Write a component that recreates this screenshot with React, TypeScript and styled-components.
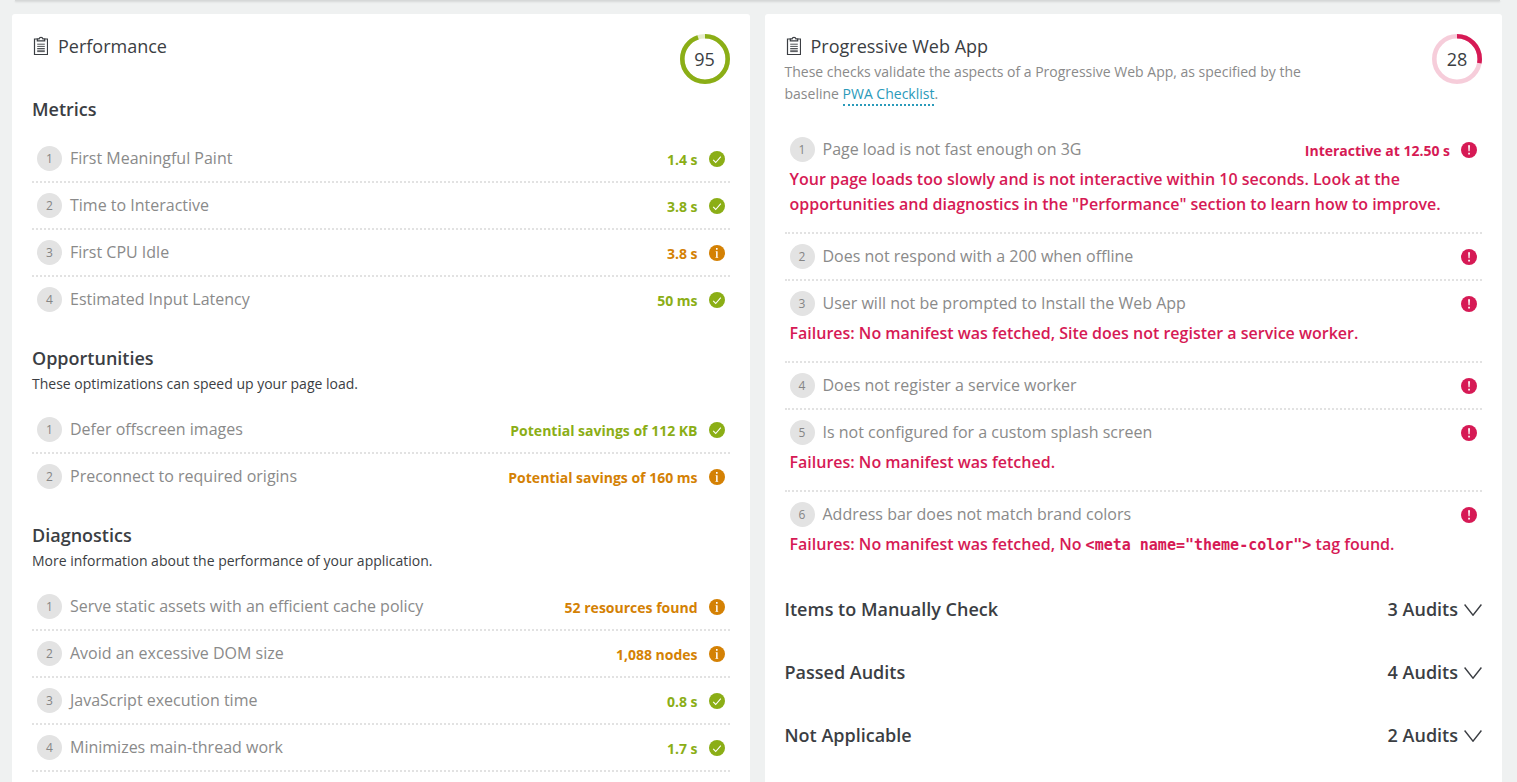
import React from "react";
import styled, { createGlobalStyle } from "styled-components";

type Status = "pass" | "warn" | "fail";

const colors: Record<Status, string> = {
  pass: "#8bae16",
  warn: "#d48104",
  fail: "#d61a55",
};

const GlobalStyle = createGlobalStyle`
  *, *::before, *::after { box-sizing: border-box; }
  body {
    margin: 0;
    background: #eff1f1;
    color: #3b3e43;
    font-family: "Open Sans", "Noto Sans", sans-serif;
    font-size: 16px;
  }
  h2, h3, p, ol { margin: 0; padding: 0; }
`;

const Page = styled.main`
  padding: 0 15px 0 12px;
`;

const PanelEdge = styled.div`
  height: 1px;
  margin: 0 2px 13px 3px;
  background: #d6d8d8;
  box-shadow: 0 1px 2px rgba(0, 0, 0, 0.16);
`;

const Columns = styled.div`
  display: grid;
  grid-template-columns: 1fr 1fr;
  gap: 15px;
`;

const Card = styled.section`
  background: #ffffff;
  border-radius: 3px;
  padding: 20px 20px 24px;
`;

const CardHeader = styled.header<{ $tall?: boolean }>`
  display: flex;
  justify-content: space-between;
  align-items: flex-start;
  min-height: ${(p) => (p.$tall ? 93 : 63)}px;
`;

const CardTitle = styled.h2`
  display: flex;
  align-items: center;
  gap: 10px;
  height: 24px;
  font-size: 18px;
  line-height: 24px;
  font-weight: 400;
`;

const Description = styled.p`
  max-width: 560px;
  margin-top: 3px;
  color: #8a8a8a;
  font-size: 14px;
  line-height: 22px;
`;

const TextLink = styled.a`
  display: inline-block;
  color: #2a9aba;
  line-height: 20px;
  text-decoration: none;
  border-bottom: 2px dotted #2a9aba;
`;

const Gauge = styled.div`
  display: grid;
  flex: none;
  width: 50px;
  height: 50px;
  place-items: center;
  font-size: 18px;

  > * { grid-area: 1 / 1; }
`;

const Group = styled.section`
  & + & { margin-top: 24px; }
`;

const GroupTitle = styled.h3`
  font-size: 18px;
  line-height: 24px;
  font-weight: 600;
  padding-bottom: 3px;
`;

const GroupNote = styled.p`
  font-size: 14px;
  line-height: 22px;
`;

const AuditList = styled.ol<{ $closed?: boolean }>`
  list-style: none;
  border-bottom: ${(p) => (p.$closed ? "2px dotted #e2e2e2" : "0")};

  ${Group} & { margin-top: 12px; }
`;

const AuditItem = styled.li`
  border-bottom: 2px dotted #e2e2e2;

  &:last-child { border-bottom: 0; }
`;

const AuditRow = styled.div`
  display: flex;
  align-items: center;
  padding: 10px 5px;
  height: 45px;
`;

const Index = styled.span`
  display: flex;
  flex: none;
  align-items: center;
  justify-content: center;
  width: 25px;
  height: 25px;
  margin-right: 8px;
  border-radius: 50%;
  background: #e3e3e3;
  color: #858585;
  font-size: 12px;
`;

const AuditName = styled.span`
  flex: 1;
  padding-bottom: 2px;
  color: #8a8a8a;
  font-size: 16px;
  line-height: 24px;
`;

const AuditValue = styled.span<{ $status: Status }>`
  margin-right: 11px;
  padding-top: 3px;
  color: ${(p) => colors[p.$status]};
  font-size: 14px;
  line-height: 20px;
  font-weight: 700;
`;

const Failure = styled.p`
  padding: 0 5px 15px;
  margin-top: -5px;
  color: ${colors.fail};
  font-size: 16px;
  line-height: 25px;
  font-weight: 600;
`;

const Code = styled.code`
  font-family: "DejaVu Sans Mono", monospace;
  font-size: 15px;
  line-height: 20px;
`;

const Disclosures = styled.div`
  display: flex;
  flex-direction: column;
  gap: 39px;
  margin-top: 25px;
  padding-bottom: 24px;
`;

const Disclosure = styled.button`
  display: flex;
  align-items: center;
  width: 100%;
  height: 24px;
  padding: 0;
  border: 0;
  background: none;
  color: inherit;
  font-family: inherit;
  font-size: 18px;
  line-height: 24px;
  font-weight: 600;
  text-align: left;
  cursor: pointer;
`;

const DisclosureLabel = styled.span`
  flex: 1;
`;

const Icon = styled.svg`
  display: block;
  flex: none;
`;

const Chevron = styled(Icon)`
  margin: 2px 0 0 6px;
`;

const Clipboard = () => (
  <Icon width="16" height="20" viewBox="0 0 16 20" fill="none" stroke="#3b3e43" aria-hidden="true">
    <path d="M5.2 3H2.5v15.5h13V3h-2.7" strokeWidth="1.2" />
    <path d="M5.3 4.9V2.8h1.8C7.3 1.7 7.9 1.4 9 1.4s1.7.3 1.9 1.4h1.8v2.1z" strokeWidth="1.2" />
    <path d="M5.2 8.2h7.6M5.2 10.4h7.6M5.2 12.5h7.6M5.2 14.2h7.6M5.2 15.6h7.6" strokeWidth="0.9" />
  </Icon>
);

const StatusIcon = ({ status }: { status: Status }) => (
  <Icon width="16" height="16" viewBox="0 0 16 16" role="img" aria-label={status}>
    <circle cx="8" cy="8" r="8" fill={colors[status]} />
    {status === "pass" && (
      <path d="M4.2 8.9l2.5 2.6 5.1-5.8" fill="none" stroke="#fff" strokeWidth="1.1" />
    )}
    {status === "warn" && (
      <path
        d="M6.7 6.2h1.9v5.9h.6v.7H6.5v-.7h.6V6.9h-.4zM7 3.1h1.6v1.6H7z"
        fill="#fff"
      />
    )}
    {status === "fail" && (
      <path d="M7.1 3.2h1.9l-.4 6.1H7.5zM7.2 10.8h1.7v1.8H7.2z" fill="#fff" />
    )}
  </Icon>
);

const Score = ({ value, status }: { value: number; status: Status }) => (
  <Gauge>
    <svg width="50" height="50" viewBox="0 0 50 50" fill="none" strokeWidth="4.6" aria-hidden="true">
      <circle cx="25" cy="25" r="22.7" stroke={colors[status]} strokeOpacity="0.22" />
      <circle
        cx="25"
        cy="25"
        r="22.7"
        stroke={colors[status]}
        pathLength="100"
        strokeDasharray={`${value} 100`}
        transform="rotate(-90 25 25)"
      />
    </svg>
    <span>{value}</span>
  </Gauge>
);

interface Audit {
  name: string;
  status: Status;
  value?: string;
  failure?: React.ReactNode;
}

const Audits = ({ items, closed }: { items: Audit[]; closed?: boolean }) => (
  <AuditList $closed={closed}>
    {items.map((item, i) => (
      <AuditItem key={item.name}>
        <AuditRow>
          <Index>{i + 1}</Index>
          <AuditName>{item.name}</AuditName>
          {item.value && <AuditValue $status={item.status}>{item.value}</AuditValue>}
          <StatusIcon status={item.status} />
        </AuditRow>
        {item.failure && <Failure>{item.failure}</Failure>}
      </AuditItem>
    ))}
  </AuditList>
);

const groups: { title: string; note?: string; closed?: boolean; items: Audit[] }[] = [
  {
    title: "Metrics",
    items: [
      { name: "First Meaningful Paint", value: "1.4 s", status: "pass" },
      { name: "Time to Interactive", value: "3.8 s", status: "pass" },
      { name: "First CPU Idle", value: "3.8 s", status: "warn" },
      { name: "Estimated Input Latency", value: "50 ms", status: "pass" },
    ],
  },
  {
    title: "Opportunities",
    note: "These optimizations can speed up your page load.",
    items: [
      { name: "Defer offscreen images", value: "Potential savings of 112 KB", status: "pass" },
      { name: "Preconnect to required origins", value: "Potential savings of 160 ms", status: "warn" },
    ],
  },
  {
    title: "Diagnostics",
    note: "More information about the performance of your application.",
    closed: true,
    items: [
      { name: "Serve static assets with an efficient cache policy", value: "52 resources found", status: "warn" },
      { name: "Avoid an excessive DOM size", value: "1,088 nodes", status: "warn" },
      { name: "JavaScript execution time", value: "0.8 s", status: "pass" },
      { name: "Minimizes main-thread work", value: "1.7 s", status: "pass" },
    ],
  },
];

const pwaAudits: Audit[] = [
  {
    name: "Page load is not fast enough on 3G",
    value: "Interactive at 12.50 s",
    status: "fail",
    failure:
      'Your page loads too slowly and is not interactive within 10 seconds. Look at the opportunities and diagnostics in the "Performance" section to learn how to improve.',
  },
  { name: "Does not respond with a 200 when offline", status: "fail" },
  {
    name: "User will not be prompted to Install the Web App",
    status: "fail",
    failure: "Failures: No manifest was fetched, Site does not register a service worker.",
  },
  { name: "Does not register a service worker", status: "fail" },
  {
    name: "Is not configured for a custom splash screen",
    status: "fail",
    failure: "Failures: No manifest was fetched.",
  },
  {
    name: "Address bar does not match brand colors",
    status: "fail",
    failure: (
      <>
        Failures: No manifest was fetched, No <Code>{'<meta name="theme-color">'}</Code> tag found.
      </>
    ),
  },
];

const collapsed = [
  { label: "Items to Manually Check", count: 3 },
  { label: "Passed Audits", count: 4 },
  { label: "Not Applicable", count: 2 },
];

export default function App() {
  return (
    <Page>
      <GlobalStyle />
      <PanelEdge />
      <Columns>
        <Card>
          <CardHeader>
            <CardTitle>
              <Clipboard />
              Performance
            </CardTitle>
            <Score value={95} status="pass" />
          </CardHeader>
          {groups.map((group) => (
            <Group key={group.title}>
              <GroupTitle>{group.title}</GroupTitle>
              {group.note && <GroupNote>{group.note}</GroupNote>}
              <Audits items={group.items} closed={group.closed} />
            </Group>
          ))}
        </Card>
        <Card>
          <CardHeader $tall>
            <div>
              <CardTitle>
                <Clipboard />
                Progressive Web App
              </CardTitle>
              <Description>
                These checks validate the aspects of a Progressive Web App, as specified by the
                baseline <TextLink href="#pwa-checklist">PWA Checklist</TextLink>.
              </Description>
            </div>
            <Score value={28} status="fail" />
          </CardHeader>
          <Audits items={pwaAudits} />
          <Disclosures>
            {collapsed.map((section) => (
              <Disclosure key={section.label} type="button" aria-expanded={false}>
                <DisclosureLabel>{section.label}</DisclosureLabel>
                {section.count} Audits
                <Chevron width="18" height="12" viewBox="0 0 18 12" fill="none" stroke="#3b3e43" strokeWidth="1.4" aria-hidden="true">
                  <path d="M.6.5L9 11.2 17.4.5" />
                </Chevron>
              </Disclosure>
            ))}
          </Disclosures>
        </Card>
      </Columns>
    </Page>
  );
}
